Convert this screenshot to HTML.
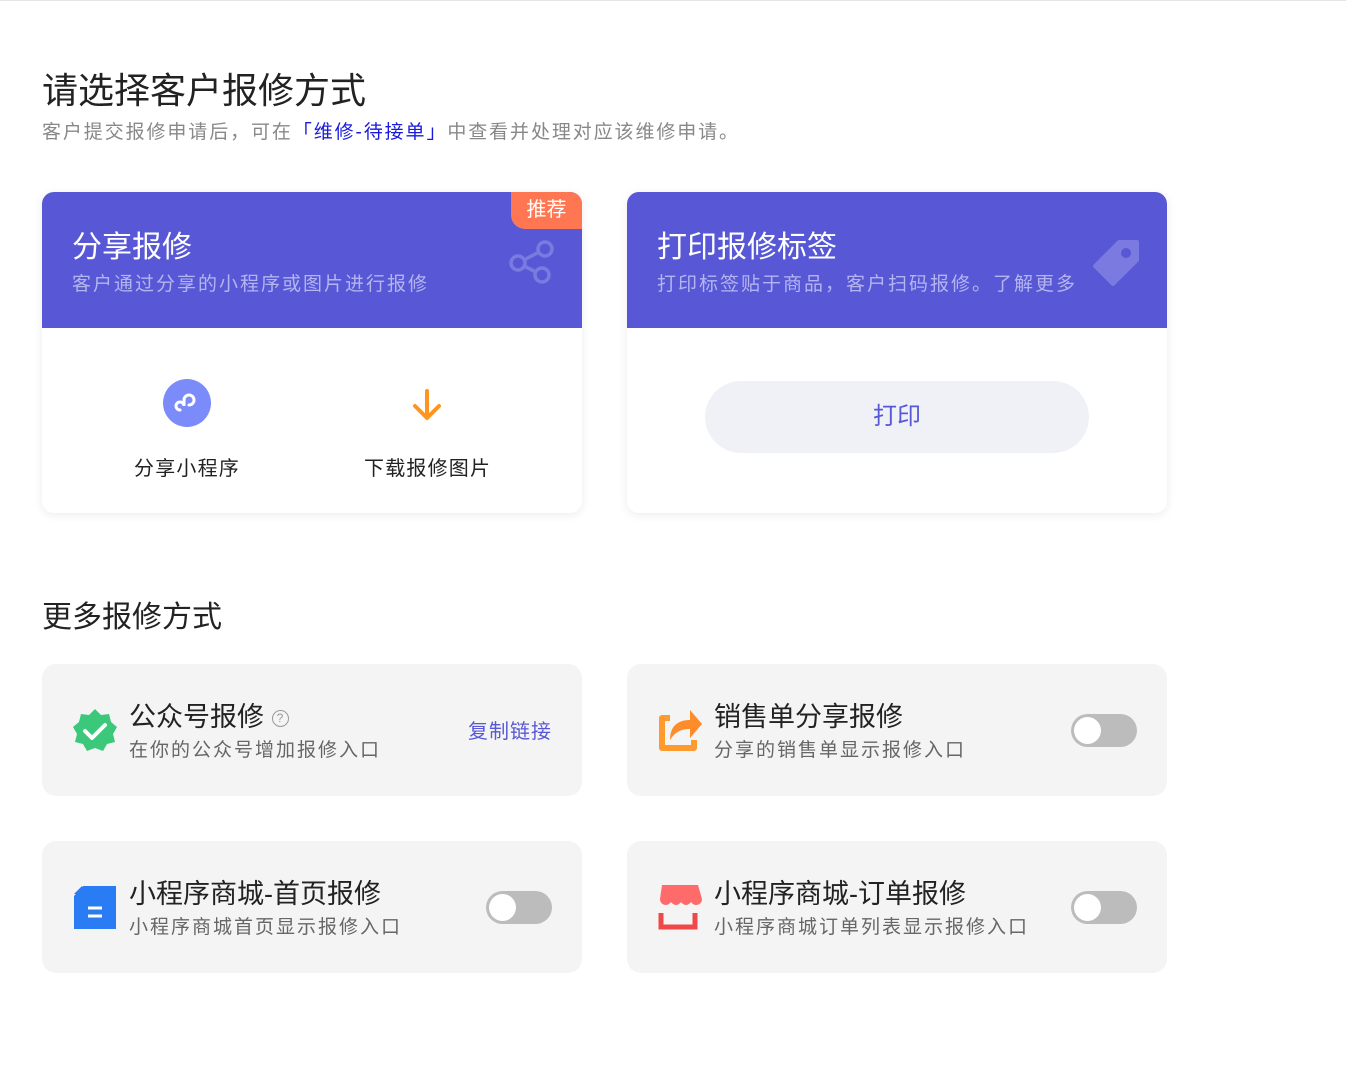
<!DOCTYPE html>
<html><head><meta charset="utf-8"><style>
*{margin:0;padding:0;box-sizing:border-box}
body{width:1346px;height:1070px;background:#fff;font-family:"Liberation Sans","Noto Sans CJK SC",sans-serif;position:relative;overflow:hidden;border-top:1px solid #e5e5e5}
.a{position:absolute;white-space:nowrap}
.card{position:absolute;width:540px;height:321px;top:191px;border-radius:12px;background:#fff;box-shadow:0 2px 10px rgba(0,0,0,.08);overflow:hidden}
.hd{height:136px;background:#5858d6;position:relative}
.hd .t{position:absolute;left:30px;top:30px;font-size:30px;color:#fff}
.hd .s{position:absolute;left:30px;top:77px;font-size:19px;letter-spacing:2px;color:#b4b4f0}
.m{position:absolute;width:540px;height:132px;border-radius:14px;background:#f4f4f5}
.m .t{position:absolute;left:87px;top:31px;font-size:27px;color:#222}
.m .s{position:absolute;left:87px;top:71px;font-size:19px;letter-spacing:2px;color:#666}
.sw{position:absolute;right:30px;top:50px;width:66px;height:33px;border-radius:17px;background:#bcbcbc}
.sw:after{content:"";position:absolute;left:3px;top:3px;width:27px;height:27px;border-radius:50%;background:#fff}
</style></head><body>
<div class="a" style="left:42px;top:61px;font-size:36px;color:#222">请选择客户报修方式</div>
<div class="a" style="left:42px;top:116px;font-size:19px;letter-spacing:1.9px;color:#888">客户提交报修申请后，可在<span style="color:#1a1adc">「维修-待接单」</span>中查看并处理对应该维修申请。</div>

<div class="card" style="left:42px">
 <div class="hd"><div class="t">分享报修</div><div class="s">客户通过分享的小程序或图片进行报修</div>
  <div style="position:absolute;right:0;top:0;width:71px;height:37px;background:#ff7752;border-bottom-left-radius:14px;color:#fff;font-size:20px;text-align:center;line-height:37px">推荐</div>
  <svg class="a" style="left:464px;top:46px" width="50" height="50" viewBox="0 0 50 50" fill="none" stroke="#7a7ae0" stroke-width="3.5"><circle cx="39" cy="11" r="7"/><circle cx="12" cy="25" r="7"/><circle cx="36" cy="37" r="7"/><path d="M18 22L33 14M18 28L30 34"/></svg>
 </div>
 <svg class="a" style="left:121px;top:187px" width="48" height="48" viewBox="0 0 48 48"><circle cx="24" cy="24" r="24" fill="#7b8cfa"/><path d="M17 31a4 4 0 1 1 4-4v-6a5 5 0 1 1 5 5" fill="none" stroke="#fff" stroke-width="3" stroke-linecap="round"/></svg>
 <div class="a" style="left:92px;top:260px;font-size:20px;letter-spacing:1.2px;color:#222">分享小程序</div>
 <svg class="a" style="left:367px;top:195px" width="36" height="36" viewBox="0 0 36 36" fill="none" stroke="#ff951f" stroke-width="4" stroke-linecap="round" stroke-linejoin="round"><path d="M18 4v27M6 19l12 12 12-12"/></svg>
 <div class="a" style="left:322px;top:260px;font-size:20px;letter-spacing:1.2px;color:#222">下载报修图片</div>
</div>

<div class="card" style="left:627px">
 <div class="hd"><div class="t">打印报修标签</div><div class="s">打印标签贴于商品，客户扫码报修。了解更多</div>
  <svg class="a" style="left:464px;top:44px" width="52" height="52" viewBox="0 0 52 52"><path d="M4 30L28 6h18v18L22 48z" fill="#7a7ae0" stroke="#7a7ae0" stroke-width="4" stroke-linejoin="round"/><circle cx="35" cy="17" r="5" fill="#5858d6"/></svg>
 </div>
 <div style="position:absolute;left:78px;top:189px;width:384px;height:72px;border-radius:36px;background:#f0f1f7;color:#5858d6;font-size:24px;text-align:center;line-height:72px">打印</div>
</div>

<div class="a" style="left:42px;top:591px;font-size:30px;color:#222">更多报修方式</div>

<div class="m" style="left:42px;top:663px">
 <svg class="a" style="left:29px;top:43px" width="48" height="48" viewBox="0 0 48 48"><path d="M24 2l6 6 8-1 2 8 6 5-4 7 2 8-8 2-4 7-8-3-8 3-4-7-8-2 2-8-4-7 6-5 2-8 8 1z" fill="#3cc87a"/><path d="M14 24l7 7 13-13" fill="none" stroke="#fff" stroke-width="4" stroke-linecap="round" stroke-linejoin="round"/></svg>
 <div class="t">公众号报修 <span style="display:inline-block;width:17px;height:17px;border:1.5px solid #999;border-radius:50%;font-size:12px;color:#999;text-align:center;line-height:15px;vertical-align:middle">?</span></div>
 <div class="s">在你的公众号增加报修入口</div>
 <div class="a" style="right:30px;top:51px;font-size:20px;letter-spacing:1px;color:#5858d6">复制链接</div>
</div>
<div class="m" style="left:627px;top:663px">
 <svg class="a" style="left:29px;top:40px" width="48" height="50" viewBox="0 0 48 50"><path d="M14 14H6v30h32v-8" fill="none" stroke="#ff9a2e" stroke-width="6" stroke-linejoin="round"/><path d="M14 36c0-14 8-20 20-20v-10l12 14-12 14v-9c-9 0-15 3-20 11z" fill="#ff8c2a"/></svg>
 <div class="t">销售单分享报修</div><div class="s">分享的销售单显示报修入口</div><div class="sw"></div>
</div>
<div class="m" style="left:42px;top:840px">
 <svg class="a" style="left:29px;top:42px" width="48" height="48" viewBox="0 0 48 48"><path d="M12 3h33v43H3V13z" fill="#2a7cf5"/><path d="M3 11l8-8v8z" fill="#2a7cf5"/><path d="M17 25h14M17 33h14" stroke="#fff" stroke-width="3"/></svg>
 <div class="t">小程序商城-首页报修</div><div class="s">小程序商城首页显示报修入口</div><div class="sw"></div>
</div>
<div class="m" style="left:627px;top:840px">
 <svg class="a" style="left:29px;top:42px" width="48" height="48" viewBox="0 0 48 48"><path d="M6 2h36l4 14c0 4-3 6-6 6s-5-3-5-3-2 3-5 3-5-3-5-3-2 3-5 3-5-3-5-3-2 3-5 3-6-2-6-6z" fill="#ff6b6b"/><path d="M5 30v14h34V30" fill="none" stroke="#f04848" stroke-width="5"/></svg>
 <div class="t">小程序商城-订单报修</div><div class="s">小程序商城订单列表显示报修入口</div><div class="sw"></div>
</div>
</body></html>
